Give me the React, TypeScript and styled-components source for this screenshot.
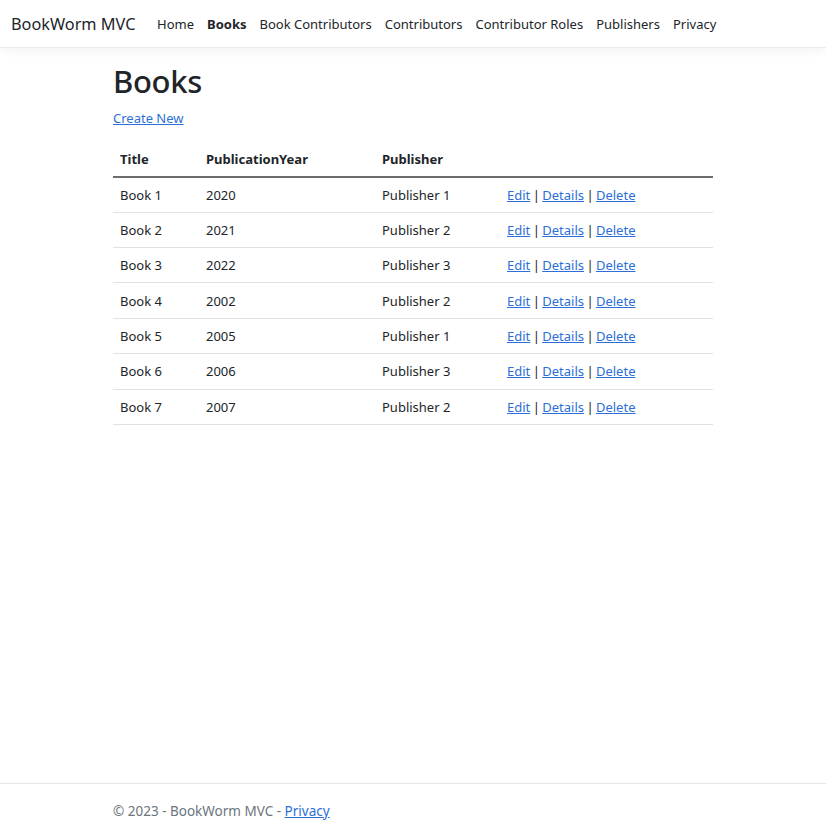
import React from "react";
import styled, { createGlobalStyle } from "styled-components";

const Global = createGlobalStyle`
  html, body { margin: 0; padding: 0; }
  body {
    font-family: "Segoe UI", "Noto Sans", "Open Sans", sans-serif;
    font-size: 13px;
    color: #212529;
    background: #fff;
  }
  * { box-sizing: border-box; }
`;

const Page = styled.div`
  min-height: 835px;
  display: flex;
  flex-direction: column;
`;

const NavBar = styled.header`
  height: 48px;
  display: flex;
  align-items: center;
  padding: 0 11px;
  border-bottom: 1px solid #e9ecef;
  box-shadow: 0 3px 10px rgba(0, 0, 0, 0.05);
`;

const Brand = styled.a`
  font-size: 16.3px;
  color: #212529;
  text-decoration: none;
  margin-right: 15px;
`;

const NavList = styled.nav`
  display: flex;
`;

const NavLink = styled.a<{ $active?: boolean }>`
  font-size: 13px;
  color: #212529;
  text-decoration: none;
  padding: 0 6.5px;
  font-weight: ${(p) => (p.$active ? 700 : 400)};
`;

const Main = styled.main`
  flex: 1;
  width: 600px;
  margin: 0 auto;
  padding-top: 15px;
`;

const Title = styled.h1`
  font-size: 31px;
  font-weight: 500;
  letter-spacing: -0.3px;
  margin: 0 0 9px;
  line-height: 1.2;
`;

const Link = styled.a`
  color: #2c6fd8;
  text-decoration: underline;
`;

const Sep = styled.span`
  margin: 0 -1px;
`;

const CreateP = styled.p`
  margin: 0 0 14px;
  line-height: 1.5;
`;

const Table = styled.table`
  width: 100%;
  border-collapse: collapse;
`;

const Th = styled.th<{ $w?: number }>`
  text-align: left;
  font-weight: 700;
  padding: 7px;
  height: 34px;
  width: ${(p) => (p.$w ? `${p.$w}px` : "auto")};
  border-bottom: 2px solid #6c6c6c;
`;

const Td = styled.td`
  padding: 7px;
  height: 35.4px;
  border-bottom: 1px solid #dee2e6;
`;

const Footer = styled.footer`
  height: 52px;
  border-top: 1px solid #e6e6e6;
  display: flex;
  align-items: center;
`;

const FooterInner = styled.div`
  width: 600px;
  margin: 0 auto;
  color: #6c757d;
  font-size: 13.5px;
  padding-top: 2px;
`;

const books = [
  ["Book 1", "2020", "Publisher 1"],
  ["Book 2", "2021", "Publisher 2"],
  ["Book 3", "2022", "Publisher 3"],
  ["Book 4", "2002", "Publisher 2"],
  ["Book 5", "2005", "Publisher 1"],
  ["Book 6", "2006", "Publisher 3"],
  ["Book 7", "2007", "Publisher 2"],
];

export default function App() {
  return (
    <Page>
      <Global />
      <NavBar>
        <Brand href="#">BookWorm MVC</Brand>
        <NavList>
          <NavLink href="#">Home</NavLink>
          <NavLink href="#" $active>Books</NavLink>
          <NavLink href="#">Book Contributors</NavLink>
          <NavLink href="#">Contributors</NavLink>
          <NavLink href="#">Contributor Roles</NavLink>
          <NavLink href="#">Publishers</NavLink>
          <NavLink href="#">Privacy</NavLink>
        </NavList>
      </NavBar>
      <Main>
        <Title>Books</Title>
        <CreateP>
          <Link href="#">Create New</Link>
        </CreateP>
        <Table>
          <thead>
            <tr>
              <Th $w={86}>Title</Th>
              <Th $w={176}>PublicationYear</Th>
              <Th $w={125}>Publisher</Th>
              <Th></Th>
            </tr>
          </thead>
          <tbody>
            {books.map((b) => (
              <tr key={b[0]}>
                <Td>{b[0]}</Td>
                <Td>{b[1]}</Td>
                <Td>{b[2]}</Td>
                <Td>
                  <Link href="#">Edit</Link> <Sep>|</Sep> <Link href="#">Details</Link>{" "}
                  <Sep>|</Sep> <Link href="#">Delete</Link>
                </Td>
              </tr>
            ))}
          </tbody>
        </Table>
      </Main>
      <Footer>
        <FooterInner>
          © 2023 - BookWorm MVC - <Link href="#">Privacy</Link>
        </FooterInner>
      </Footer>
    </Page>
  );
}
